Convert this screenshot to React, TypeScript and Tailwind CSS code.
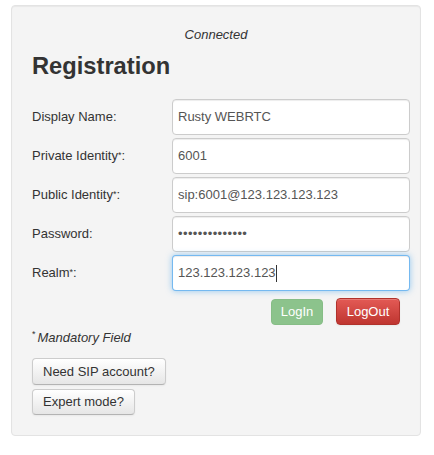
import React from "react";

const Sup = () => <sup className="text-[9px] relative -top-[2px]">*</sup>;

function Row({ label, value, focused, type }: { label: React.ReactNode; value: string; focused?: boolean; type?: string }) {
  return (
    <div className="flex items-center h-[36px]">
      <div className="w-[140px] text-[13px] text-[#333]">{label}</div>
      <div
        className={
          "w-[238px] h-[36px] bg-white rounded-[4px] flex items-center pl-[5px] text-[13px] text-[#555] " +
          (focused
            ? "border border-[rgba(82,168,236,0.8)] shadow-[inset_0_1px_1px_rgba(0,0,0,0.075),0_0_6px_rgba(82,168,236,0.6)]"
            : "border border-[#ccc] shadow-[inset_0_1px_1px_rgba(0,0,0,0.075)]")
        }
      >
        {type === "password" ? (
          <span className="text-[13px] tracking-[0.4px] text-[#555]">{value}</span>
        ) : (
          <span>{value}</span>
        )}
        {focused && <span className="inline-block w-[1px] h-[17px] bg-[#333] ml-[0px]" />}
      </div>
    </div>
  );
}

export default function App() {
  return (
    <div className="w-[434px] h-[455px] bg-white overflow-hidden" style={{ fontFamily: '"Liberation Sans", Arial, sans-serif' }}>
      <div className="ml-[11px] mt-[5px] w-[410px] h-[431px] bg-[#f4f4f4] border border-[#e3e3e3] rounded-[4px] shadow-[inset_0_1px_1px_rgba(0,0,0,0.05)] pl-[20px] pt-[19px] flex flex-col">
        <div className="text-center italic text-[13px] leading-[20px] text-[#333] pr-[20px]">Connected</div>
        <div className="mt-[6px] text-[23.7px] leading-[30px] font-bold text-[#333]">Registration</div>
        <div className="mt-[18px] flex flex-col gap-[3px]">
          <Row label="Display Name:" value="Rusty WEBRTC" />
          <Row label={<>Private Identity<Sup />:</>} value="6001" />
          <Row label={<>Public Identity<Sup />:</>} value="sip:6001@123.123.123.123" />
          <Row label="Password:" value="••••••••••••••" type="password" />
          <Row label={<>Realm<Sup />:</>} value="123.123.123.123" focused />
        </div>
        <div className="flex justify-end w-[378px] pr-[10px] mt-[7px] gap-[13px] items-start">
          <button className="w-[52px] h-[26px] mt-[1px] rounded-[4px] bg-[#8cc38c] text-white text-[13px] border border-[#86bd86]">LogIn</button>
          <button className="w-[64px] h-[27px] rounded-[4px] bg-gradient-to-b from-[#e35a55] to-[#bf3530] text-white text-[13px] border border-[#b0322c] shadow-[inset_0_1px_0_rgba(255,255,255,0.2),0_1px_2px_rgba(0,0,0,0.05)]">LogOut</button>
        </div>
        <div className="mt-[3px] text-[13px] leading-[20px] text-[#333] flex items-start">
          <span className="text-[9px] leading-[12px] mr-[2px]">*</span>
          <span className="italic">Mandatory Field</span>
        </div>
        <div className="mt-[10px] flex flex-col items-start gap-[4px]">
          <button className="h-[27px] px-[10px] rounded-[4px] bg-gradient-to-b from-white to-[#e6e6e6] border border-[#ccc] border-b-[#b3b3b3] text-[13px] text-[#333] shadow-[inset_0_1px_0_rgba(255,255,255,0.2),0_1px_2px_rgba(0,0,0,0.05)]">Need SIP account?</button>
          <button className="h-[26px] px-[10px] rounded-[4px] bg-gradient-to-b from-white to-[#e6e6e6] border border-[#ccc] border-b-[#b3b3b3] text-[13px] text-[#333] shadow-[inset_0_1px_0_rgba(255,255,255,0.2),0_1px_2px_rgba(0,0,0,0.05)]">Expert mode?</button>
        </div>
      </div>
    </div>
  );
}
